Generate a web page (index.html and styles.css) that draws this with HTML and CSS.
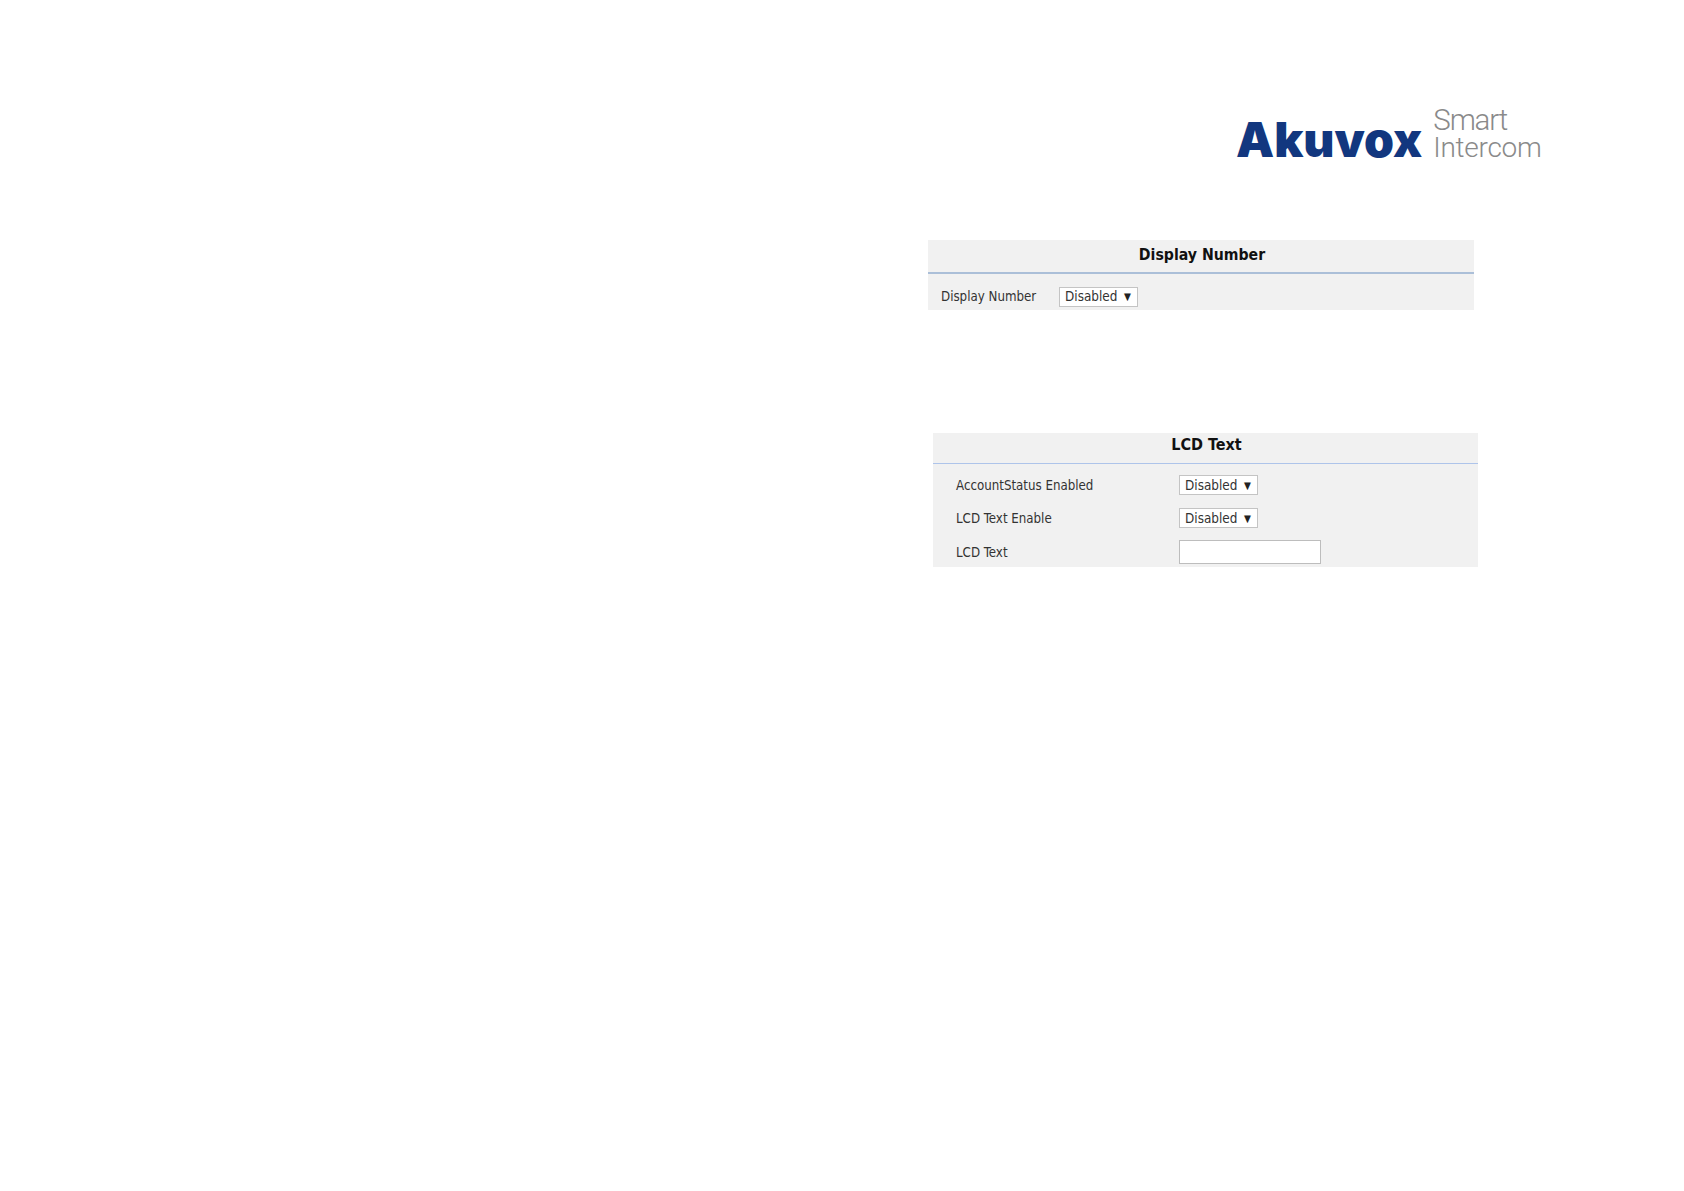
FILE: index.html
```html
<!DOCTYPE html>
<html lang="en">
<head>
<meta charset="utf-8">
<title>Akuvox Smart Intercom</title>
<link rel="stylesheet" href="styles.css">
</head>
<body>
<header class="logo">
  <span class="logo-brand">Akuvox</span>
  <span class="logo-tag"><span class="tag-smart">Smart</span><span class="tag-intercom">Intercom</span></span>
</header>
<section class="panel panel-number">
  <h2 class="panel-title">Display Number</h2>
  <div class="row row-number">
    <span class="label label-number">Display Number</span>
    <span class="select">Disabled<i class="arrow">▼</i></span>
  </div>
</section>
<section class="panel panel-lcd">
  <h2 class="panel-title title-lcd">LCD Text</h2>
  <div class="rows-lcd">
    <div class="row"><span class="label label-lcd">AccountStatus Enabled</span><span class="select">Disabled<i class="arrow">▼</i></span></div>
    <div class="row"><span class="label label-lcd">LCD Text Enable</span><span class="select">Disabled<i class="arrow">▼</i></span></div>
    <div class="row"><span class="label label-lcd">LCD Text</span><span class="input"></span></div>
  </div>
</section>
</body>
</html>
```
FILE: styles.css
```css
html, body { margin: 0; padding: 0; background: #fff; }
body { width: 1684px; height: 1191px; overflow: hidden; font-family: "Liberation Sans", Arial, sans-serif; }
.logo { display: flex; align-items: flex-end; height: 160px; margin-left: 1236px; gap: 11px; }
.logo-brand { font-family: "Inter", sans-serif; font-weight: 900; font-size: 48px; line-height: 40px; letter-spacing: 0; color: #12377f; display: inline-block; }
.logo-tag { display: flex; flex-direction: column; color: #8a8a8a; font-family: "Roboto", sans-serif; font-weight: 300; }
.tag-smart { font-size: 29.5px; line-height: 30px; letter-spacing: -1.2px; }
.tag-intercom { font-size: 28px; line-height: 25px; letter-spacing: -0.3px; }
.panel { background: #f1f1f1; }
.panel-number { width: 546px; margin: 80px 0 0 928px; height: 70px; }
.panel-lcd { width: 545px; margin: 123px 0 0 933px; height: 134px; }
.panel-title { margin: 0; height: 32px; border-bottom: 2px solid #abbfd8; text-align: center; font: 700 15.7px/30px "DejaVu Sans Condensed", "DejaVu Sans", sans-serif; font-stretch: condensed; color: #111; padding-left: 2px; box-sizing: content-box; }
.title-lcd { height: 30px; border-bottom: 1px solid #aec4ea; font-size: 16px; line-height: 23px; padding-left: 2px; }
.row { display: flex; align-items: center; }
.row-number { padding: 13px 0 0 13px; }
.rows-lcd { display: flex; flex-direction: column; gap: 12.5px; padding-top: 11px; }
.label { font: 13.2px/20px "DejaVu Sans Condensed", "DejaVu Sans", sans-serif; font-stretch: condensed; color: #333; }
.label-number { width: 118px; }
.label-lcd { width: 223px; margin-left: 23px; }
.select { display: inline-flex; align-items: center; justify-content: space-between; box-sizing: border-box; width: 79px; height: 20px; background: #fff; border: 1px solid #c4c4c4; padding: 0 6px 0 5px; font: 13.4px/18px "DejaVu Sans Condensed", "DejaVu Sans", sans-serif; font-stretch: condensed; color: #333; }
.rows-lcd .label { line-height: 16px; padding: 3px 0 1px; }
.rows-lcd .select { padding-top: 2px; }
.arrow { font-style: normal; font-size: 10px; color: #222; }
.input { display: block; box-sizing: border-box; width: 142px; height: 24px; background: #fff; border: 1px solid #bdbdbd; }
```
